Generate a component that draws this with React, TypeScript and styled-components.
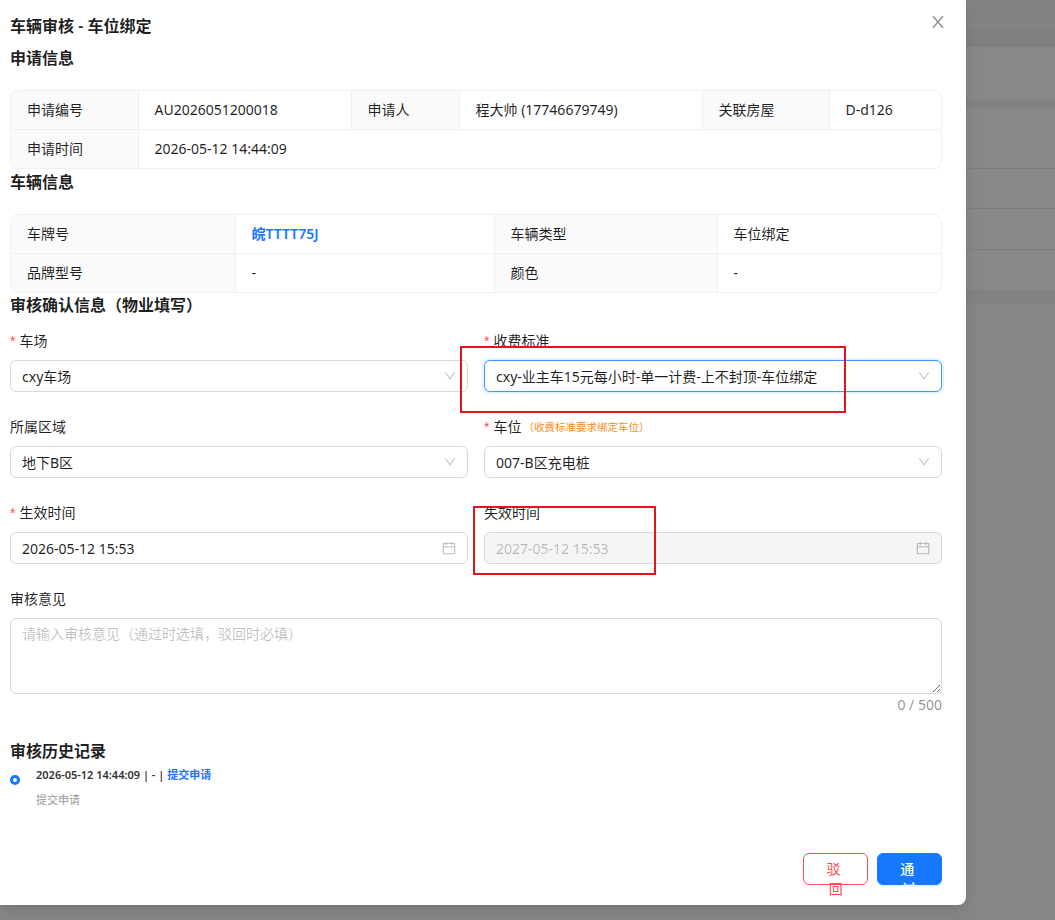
import React from 'react';
import styled, { createGlobalStyle, css } from 'styled-components';

const GlobalStyle = createGlobalStyle`
  html, body {
    margin: 0;
    padding: 0;
  }
  body {
    font-family: "Noto Sans", "Noto Sans CJK SC", sans-serif;
    font-size: 14px;
    color: rgba(0, 0, 0, 0.88);
    background: #878787;
  }
  * {
    box-sizing: border-box;
  }
`;

const Page = styled.div`
  display: flex;
  width: 1055px;
  height: 920px;
  overflow: hidden;
  background: #868686;
`;

const Modal = styled.div`
  position: relative;
  flex: none;
  width: 966px;
  height: 905px;
  padding: 14px 24px 20px 10px;
  background: #fff;
  border-bottom-right-radius: 8px;
  box-shadow: 0 6px 16px rgba(0, 0, 0, 0.08), 0 3px 6px -4px rgba(0, 0, 0, 0.12);
  display: flex;
  flex-direction: column;
  z-index: 1;
`;

const Backdrop = styled.div`
  flex: 1;
  display: flex;
  flex-direction: column;
`;

const Band = styled.div<{ $h: number; $c: string }>`
  flex: none;
  height: ${p => p.$h}px;
  background: ${p => p.$c};
`;

const Header = styled.div`
  display: flex;
  justify-content: space-between;
  align-items: flex-start;
`;

const Title = styled.div`
  font-size: 16px;
  font-weight: 600;
  line-height: 24px;
`;

const CloseButton = styled.span`
  display: flex;
  margin-right: -4px;
  color: rgba(0, 0, 0, 0.45);
`;

const SectionTitle = styled.div<{ $top?: number; $bottom?: number }>`
  font-size: 16px;
  font-weight: 600;
  line-height: 24px;
  margin-top: ${p => p.$top ?? 0}px;
  margin-bottom: ${p => p.$bottom ?? 0}px;
`;

const DescWrap = styled.div`
  border: 1px solid #f0f0f0;
  border-radius: 8px;
  overflow: hidden;
`;

const DescTable = styled.table`
  width: 100%;
  border-collapse: collapse;
  table-layout: fixed;

  tr:last-child > * {
    border-bottom: none;
  }
  tr > *:last-child {
    border-right: none;
  }
`;

const cellBase = css`
  padding: 8px 16px;
  line-height: 22px;
  font-size: 14px;
  font-weight: 400;
  text-align: left;
  border-right: 1px solid #f0f0f0;
  border-bottom: 1px solid #f0f0f0;
  white-space: nowrap;
`;

const LabelCell = styled.th`
  ${cellBase};
  background: #fafafa;
  color: rgba(0, 0, 0, 0.88);
`;

const ValueCell = styled.td<{ $link?: boolean }>`
  ${cellBase};
  color: ${p => (p.$link ? '#1677ff' : 'rgba(0, 0, 0, 0.88)')};
  font-weight: ${p => (p.$link ? 600 : 400)};
`;

const FormGrid = styled.div`
  display: grid;
  grid-template-columns: 1fr 1fr;
  column-gap: 16px;
  row-gap: 24px;
  margin-top: 13px;
`;

const FormItem = styled.div<{ $wide?: boolean }>`
  grid-column: ${p => (p.$wide ? '1 / -1' : 'auto')};
  display: flex;
  flex-direction: column;
`;

const Label = styled.label`
  display: flex;
  align-items: center;
  line-height: 22px;
  padding-bottom: 8px;
  font-size: 14px;
`;

const Required = styled.span`
  color: #ff4d4f;
  font-family: "Liberation Sans", sans-serif;
  font-size: 14px;
  margin-right: 4px;
`;

const Hint = styled.span`
  color: #fa8c16;
  font-size: 10.5px;
  margin-left: 2px;
`;

const Field = styled.div<{ $focused?: boolean; $disabled?: boolean }>`
  display: flex;
  align-items: center;
  justify-content: space-between;
  height: 32px;
  padding: 0 11px;
  border: 1px solid ${p => (p.$focused ? '#4096ff' : '#d9d9d9')};
  border-radius: 6px;
  background: ${p => (p.$disabled ? '#f5f5f5' : '#fff')};
  color: ${p => (p.$disabled ? 'rgba(0, 0, 0, 0.25)' : 'rgba(0, 0, 0, 0.88)')};
  box-shadow: ${p => (p.$focused ? '0 0 0 2px rgba(5, 145, 255, 0.1)' : 'none')};
  font-size: 14px;
`;

const Suffix = styled.span`
  display: flex;
  color: rgba(0, 0, 0, 0.25);
`;

const TextArea = styled.textarea`
  width: 100%;
  height: 76px;
  padding: 4px 11px;
  border: 1px solid #d9d9d9;
  border-radius: 6px;
  font-family: inherit;
  font-size: 14px;
  line-height: 22px;
  color: rgba(0, 0, 0, 0.88);
  resize: vertical;
  outline: none;

  &::placeholder {
    color: rgba(0, 0, 0, 0.25);
  }
`;

const Counter = styled.div`
  text-align: right;
  color: rgba(0, 0, 0, 0.45);
  line-height: 22px;
`;

const Timeline = styled.div`
  margin-top: 4px;
  display: flex;
  flex-direction: column;
`;

const TimelineItem = styled.div`
  position: relative;
  padding-left: 26px;
`;

const Dot = styled.span`
  position: absolute;
  left: 0;
  top: 8px;
  width: 10px;
  height: 10px;
  border: 3px solid #1677ff;
  border-radius: 50%;
  background: #fff;
`;

const TimelineHead = styled.div`
  font-size: 11px;
  line-height: 16px;
  font-weight: 600;
  color: #333;
`;

const Accent = styled.span`
  color: #1677ff;
`;

const TimelineDesc = styled.div`
  margin-top: 9px;
  font-size: 11px;
  line-height: 16px;
  color: #999;
`;

const Footer = styled.div`
  margin-top: auto;
  display: flex;
  justify-content: flex-end;
  gap: 9px;
`;

const Button = styled.button<{ $variant: 'danger' | 'primary' }>`
  height: 32px;
  padding: 4px 15px;
  border-radius: 6px;
  font-family: inherit;
  font-size: 14px;
  cursor: pointer;
  ${p =>
    p.$variant === 'primary'
      ? css`
          background: #1677ff;
          border: 1px solid #1677ff;
          color: #fff;
          font-weight: 500;
          box-shadow: 0 2px 0 rgba(5, 145, 255, 0.1);
        `
      : css`
          background: #fff;
          border: 1px solid #ff4d4f;
          color: #ff4d4f;
        `}

  span {
    letter-spacing: 0.34em;
    margin-right: -0.34em;
  }
`;

const Annotation = styled.div<{ $x: number; $y: number; $w: number; $h: number }>`
  position: absolute;
  left: ${p => p.$x}px;
  top: ${p => p.$y}px;
  width: ${p => p.$w}px;
  height: ${p => p.$h}px;
  border: 2px solid #e3151c;
  pointer-events: none;
`;

const CloseIcon = () => (
  <svg width="16" height="16" viewBox="64 64 896 896" fill="currentColor">
    <path d="M563.8 512l262.5-312.9c4.4-5.2.7-13.1-6.1-13.1h-79.8c-4.7 0-9.2 2.1-12.3 5.7L511.6 449.8 295.1 191.7c-3-3.6-7.5-5.7-12.3-5.7H203c-6.8 0-10.5 7.9-6.1 13.1L459.4 512 196.9 824.9A7.95 7.95 0 00203 838h79.8c4.7 0 9.2-2.1 12.3-5.7l216.5-258.1 216.5 258.1c3 3.6 7.5 5.7 12.3 5.7h79.8c6.8 0 10.5-7.9 6.1-13.1L563.8 512z" />
  </svg>
);

const DownIcon = () => (
  <svg width="12" height="12" viewBox="64 64 896 896" fill="currentColor">
    <path d="M884 256h-75c-5.1 0-9.9 2.5-12.9 6.6L512 654.2 227.9 262.6c-3-4.1-7.8-6.6-12.9-6.6h-75c-6.5 0-10.3 7.4-6.5 12.7l352.6 486.1c12.8 17.6 39 17.6 51.7 0l352.6-486.1c3.9-5.3.1-12.7-6.4-12.7z" />
  </svg>
);

const CalendarIcon = () => (
  <svg width="14" height="14" viewBox="64 64 896 896" fill="currentColor">
    <path d="M880 184H712v-64c0-4.4-3.6-8-8-8h-56c-4.4 0-8 3.6-8 8v64H384v-64c0-4.4-3.6-8-8-8h-56c-4.4 0-8 3.6-8 8v64H144c-17.7 0-32 14.3-32 32v664c0 17.7 14.3 32 32 32h736c17.7 0 32-14.3 32-32V216c0-17.7-14.3-32-32-32zm-40 656H184V460h656v380zM184 392V256h128v48c0 4.4 3.6 8 8 8h56c4.4 0 8-3.6 8-8v-48h256v48c0 4.4 3.6 8 8 8h56c4.4 0 8-3.6 8-8v-48h128v136H184z" />
  </svg>
);

// greyed-out list page seen through the mask, right of the drawer
const bands = [
  { h: 30, c: '#838383' },
  { h: 1, c: '#7c7c7c' },
  { h: 16, c: '#808080' },
  { h: 52, c: '#888888' },
  { h: 9, c: '#828282' },
  { h: 60, c: '#888888' },
  { h: 1, c: '#7e7e7e' },
  { h: 39, c: '#888888' },
  { h: 1, c: '#7e7e7e' },
  { h: 40, c: '#888888' },
  { h: 1, c: '#7e7e7e' },
  { h: 40, c: '#888888' },
  { h: 13, c: '#828282' },
];

type SelectProps = {
  label: string;
  value: string;
  required?: boolean;
  hint?: string;
  focused?: boolean;
  disabled?: boolean;
  date?: boolean;
};

const SelectItem: React.FC<SelectProps> = ({ label, value, required, hint, focused, disabled, date }) => (
  <FormItem>
    <Label>
      {required && <Required>*</Required>}
      {label}
      {hint && <Hint>{hint}</Hint>}
    </Label>
    <Field $focused={focused} $disabled={disabled}>
      <span>{value}</span>
      <Suffix>{date ? <CalendarIcon /> : <DownIcon />}</Suffix>
    </Field>
  </FormItem>
);

const App: React.FC = () => {
  return (
    <Page>
      <GlobalStyle />
      <Modal>
        <Header>
          <Title>车辆审核 - 车位绑定</Title>
          <CloseButton>
            <CloseIcon />
          </CloseButton>
        </Header>

        <SectionTitle $top={8} $bottom={20}>申请信息</SectionTitle>
        <DescWrap>
          <DescTable>
            <colgroup>
              <col style={{ width: 127 }} />
              <col style={{ width: 213 }} />
              <col style={{ width: 108 }} />
              <col style={{ width: 243 }} />
              <col style={{ width: 127 }} />
              <col style={{ width: 112 }} />
            </colgroup>
            <tbody>
              <tr>
                <LabelCell>申请编号</LabelCell>
                <ValueCell>AU2026051200018</ValueCell>
                <LabelCell>申请人</LabelCell>
                <ValueCell>程大帅 (17746679749)</ValueCell>
                <LabelCell>关联房屋</LabelCell>
                <ValueCell>D-d126</ValueCell>
              </tr>
              <tr>
                <LabelCell>申请时间</LabelCell>
                <ValueCell colSpan={5}>2026-05-12 14:44:09</ValueCell>
              </tr>
            </tbody>
          </DescTable>
        </DescWrap>

        <SectionTitle $top={1} $bottom={20}>车辆信息</SectionTitle>
        <DescWrap>
          <DescTable>
            <colgroup>
              <col style={{ width: 224 }} />
              <col style={{ width: 259 }} />
              <col style={{ width: 223 }} />
              <col style={{ width: 224 }} />
            </colgroup>
            <tbody>
              <tr>
                <LabelCell>车牌号</LabelCell>
                <ValueCell $link>皖TTTT75J</ValueCell>
                <LabelCell>车辆类型</LabelCell>
                <ValueCell>车位绑定</ValueCell>
              </tr>
              <tr>
                <LabelCell>品牌型号</LabelCell>
                <ValueCell>-</ValueCell>
                <LabelCell>颜色</LabelCell>
                <ValueCell>-</ValueCell>
              </tr>
            </tbody>
          </DescTable>
        </DescWrap>

        <SectionTitle>审核确认信息（物业填写）</SectionTitle>
        <FormGrid>
          <SelectItem label="车场" value="cxy车场" required />
          <SelectItem label="收费标准" value="cxy-业主车15元每小时-单一计费-上不封顶-车位绑定" required focused />
          <SelectItem label="所属区域" value="地下B区" />
          <SelectItem label="车位" value="007-B区充电桩" required hint="（收费标准要求绑定车位）" />
          <SelectItem label="生效时间" value="2026-05-12 15:53" required date />
          <SelectItem label="失效时间" value="2027-05-12 15:53" disabled date />
          <FormItem $wide>
            <Label>审核意见</Label>
            <TextArea placeholder="请输入审核意见（通过时选填，驳回时必填）" />
            <Counter>0 / 500</Counter>
          </FormItem>
        </FormGrid>

        <SectionTitle $top={23}>审核历史记录</SectionTitle>
        <Timeline>
          <TimelineItem>
            <Dot />
            <TimelineHead>
              2026-05-12 14:44:09 | - | <Accent>提交申请</Accent>
            </TimelineHead>
            <TimelineDesc>提交申请</TimelineDesc>
          </TimelineItem>
        </Timeline>

        <Footer>
          <Button $variant="danger">
            <span>驳回</span>
          </Button>
          <Button $variant="primary">
            <span>通过</span>
          </Button>
        </Footer>

        <Annotation $x={460} $y={346} $w={386} $h={67} />
        <Annotation $x={473} $y={506} $w={183} $h={69} />
      </Modal>
      <Backdrop>
        {bands.map((b, i) => (
          <Band key={i} $h={b.h} $c={b.c} />
        ))}
      </Backdrop>
    </Page>
  );
};

export default App;
